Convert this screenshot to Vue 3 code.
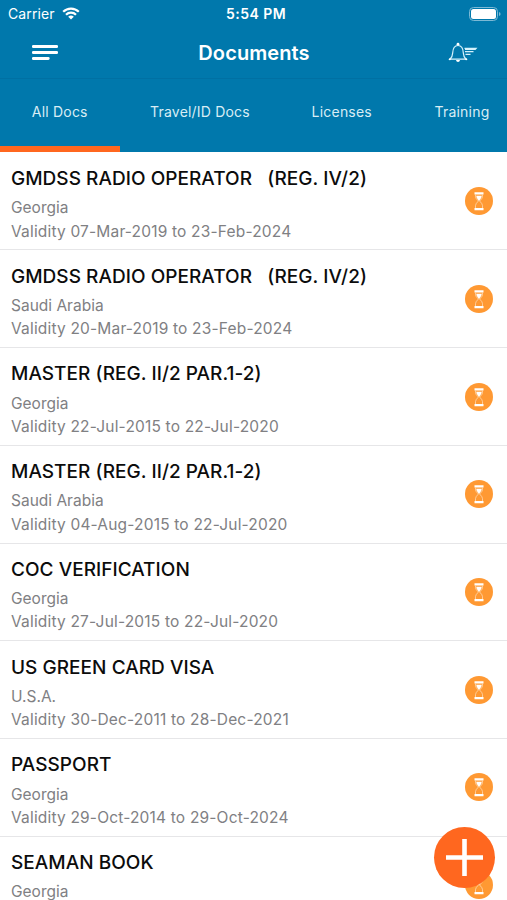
<template>
  <div class="screen">
    <header class="header">
      <div class="status-bar">
        <div class="carrier">
          <span>Carrier</span>
          <svg class="wifi" viewBox="0 0 18 13">
            <path d="M1.2 4.8a11 11 0 0 1 15.6 0M4 7.7a7 7 0 0 1 10 0" />
            <path class="solid" d="M6.2 9.8a4 4 0 0 1 5.6 0L9 12.6z" />
          </svg>
        </div>
        <span class="time">5:54 PM</span>
        <svg class="battery" viewBox="0 0 32 14">
          <rect class="frame" x="0.5" y="0.5" width="28" height="13" rx="4" />
          <rect class="level" x="2" y="2" width="25" height="10" rx="2.5" />
          <path class="tip" d="M30 5v4q1.6-.6 1.6-2T30 5z" />
        </svg>
      </div>

      <div class="nav-bar">
        <button class="icon-button" aria-label="Menu">
          <svg class="menu" viewBox="0 0 26 16">
            <path d="M1.3 1.5h23.4M1.3 7.5h23.4M1.3 13.5h15" />
          </svg>
        </button>
        <h1>Documents</h1>
        <button class="icon-button" aria-label="Notifications">
          <svg class="bell" viewBox="0 0 30 21">
            <path d="M2 17.2h16c-2-1.6-2.5-3.2-2.7-6.3-.2-4.6-1.6-7.4-5.3-7.4s-5.1 2.8-5.3 7.4C4.5 14 4 15.6 2 17.2z" />
            <path class="lines" d="M16.5 6.3h11.7l-1 1.2H17M17 9.7h8.5M17.5 12.3h5" />
            <circle cx="10" cy="2.2" r="1.4" />
            <path class="solid" d="M8 18h4q-.4 2-2 2t-2-2z" />
            <circle cx="1.8" cy="17.3" r="1" />
            <circle cx="18.2" cy="17.3" r="1" />
          </svg>
        </button>
      </div>

      <nav class="tabs">
        <button
          v-for="tab in tabs"
          :key="tab.id"
          :class="['tab', tab.id, { active: activeTab === tab.id }]"
          @click="activeTab = tab.id"
        >
          <span>{{ tab.label }}</span>
        </button>
      </nav>
    </header>

    <ul class="documents">
      <li v-for="(doc, index) in documents" :key="index" class="document">
        <div class="info">
          <h2>{{ doc.title }}</h2>
          <p>{{ doc.country }}</p>
          <p v-if="doc.from" class="validity">Validity {{ doc.from }} to {{ doc.to }}</p>
        </div>
        <svg class="hourglass" viewBox="0 0 28 28">
          <circle cx="14" cy="14" r="14" />
          <path class="caps" d="M9.5 5.3h9v2.2h-9zM9.5 21h9v2.2h-9z" />
          <path class="glass" d="M10.5 7.5v2.3q0 1.5 2.9 4.2-2.9 2.8-2.9 4.6v2.4M17.5 7.5v2.3q0 1.5-2.9 4.2 2.9 2.8 2.9 4.6v2.4" />
          <path class="caps" d="M11.2 8.7h5.6q0 2.3-2.8 5.3-2.8-3-2.8-5.3z" />
        </svg>
      </li>
    </ul>

    <button class="add-button" aria-label="Add document">
      <svg viewBox="0 0 61 61">
        <path d="M30.5 12v37M12 30.5h37" />
      </svg>
    </button>
  </div>
</template>

<script setup>
import { ref } from 'vue'

const activeTab = ref('all')

const tabs = [
  { id: 'all', label: 'All Docs' },
  { id: 'travel', label: 'Travel/ID Docs' },
  { id: 'licenses', label: 'Licenses' },
  { id: 'training', label: 'Training' }
]

const documents = [
  { title: 'GMDSS RADIO OPERATOR   (REG. IV/2)', country: 'Georgia', from: '07-Mar-2019', to: '23-Feb-2024' },
  { title: 'GMDSS RADIO OPERATOR   (REG. IV/2)', country: 'Saudi Arabia', from: '20-Mar-2019', to: '23-Feb-2024' },
  { title: 'MASTER (REG. II/2 PAR.1-2)', country: 'Georgia', from: '22-Jul-2015', to: '22-Jul-2020' },
  { title: 'MASTER (REG. II/2 PAR.1-2)', country: 'Saudi Arabia', from: '04-Aug-2015', to: '22-Jul-2020' },
  { title: 'COC VERIFICATION', country: 'Georgia', from: '27-Jul-2015', to: '22-Jul-2020' },
  { title: 'US GREEN CARD VISA', country: 'U.S.A.', from: '30-Dec-2011', to: '28-Dec-2021' },
  { title: 'PASSPORT', country: 'Georgia', from: '29-Oct-2014', to: '29-Oct-2024' },
  { title: 'SEAMAN BOOK', country: 'Georgia', from: '', to: '' }
]
</script>

<style>
body {
  margin: 0;
  overflow: hidden;
}
</style>

<style scoped>
.screen {
  position: relative;
  width: 507px;
  height: 900px;
  overflow: hidden;
  background: #fff;
  font-family: Inter, "Liberation Sans", sans-serif;
}

button {
  padding: 0;
  border: none;
  background: none;
  color: inherit;
  font: inherit;
  cursor: pointer;
}

svg {
  display: block;
  flex: none;
}

.header {
  height: 152px;
  background: #0078ac;
  color: #fff;
}

.status-bar {
  display: grid;
  grid-template-columns: 1fr auto 1fr;
  align-items: center;
  height: 27px;
  padding: 0 6px 0 8px;
  font-size: 14px;
}

.carrier {
  display: flex;
  align-items: center;
  gap: 7px;
  letter-spacing: 0.1px;
}

.wifi {
  width: 18px;
  height: 13px;
  fill: none;
  stroke: #fff;
  stroke-width: 2.2;
}

.solid {
  fill: #fff;
  stroke: none;
}

.time {
  margin-left: 3px;
  font-weight: 600;
  letter-spacing: 0.45px;
}

.battery {
  justify-self: end;
  width: 32px;
  height: 14px;
}

.frame {
  fill: none;
  stroke: #7cb9d5;
}

.level {
  fill: #fff;
}

.tip {
  fill: #7cb9d5;
}

.nav-bar {
  display: flex;
  align-items: center;
  justify-content: space-between;
  box-sizing: border-box;
  height: 52px;
  padding: 0 29px 0 32px;
  border-bottom: 1px solid #0070a3;
}

h1 {
  margin: 0 0 0 2px;
  font-size: 20px;
  font-weight: 600;
  letter-spacing: 0.1px;
}

.menu {
  width: 26px;
  height: 16px;
  stroke: #fff;
  stroke-width: 2.8;
  stroke-linecap: round;
}

.bell {
  width: 30px;
  height: 21px;
  fill: none;
  stroke: #d5f2fc;
  stroke-width: 1.2;
}

.bell circle {
  fill: #fff;
  stroke: none;
}

.tabs {
  display: flex;
  height: 73px;
  overflow: hidden;
  color: #d9edf5;
  font-size: 14px;
}

.tab {
  box-sizing: border-box;
  flex: none;
  height: 100%;
  padding-bottom: 3px;
  border-bottom: 6px solid transparent;
  letter-spacing: 0.2px;
  white-space: nowrap;
}

.tab.active {
  border-bottom-color: #ff671f;
}

.all {
  width: 119.5px;
}

.travel {
  width: 161px;
}

.licenses {
  width: 122.5px;
}

.training {
  width: 118px;
}

.documents {
  margin: 0;
  padding: 0.8px 0 0;
  list-style: none;
}

.document {
  display: flex;
  align-items: center;
  justify-content: space-between;
  box-sizing: border-box;
  height: 97.7px;
  padding: 0 14px 0 11px;
  border-bottom: 1px solid #e6e6e8;
}

.info {
  align-self: flex-start;
  padding-top: 14.3px;
}

h2 {
  margin: 0 0 5.3px;
  color: #0c0c0c;
  font-size: 19px;
  font-weight: 500;
  letter-spacing: 0.04px;
  line-height: 24px;
  white-space: pre;
}

p {
  margin: 0;
  color: #808083;
  font-size: 15.5px;
  line-height: 23.3px;
  white-space: nowrap;
}

.validity {
  letter-spacing: 0.18px;
}

.hourglass {
  width: 28px;
  height: 28px;
  fill: #ff9933;
}

.caps {
  fill: #fff;
}

.glass {
  fill: none;
  stroke: #ffe2c2;
  stroke-width: 0.7;
}

.add-button {
  position: absolute;
  right: 12px;
  bottom: 12px;
  width: 61px;
  height: 61px;
  border-radius: 50%;
  background: #ff671f;
}

.add-button path {
  stroke: #fff;
  stroke-width: 4.6;
}
</style>
